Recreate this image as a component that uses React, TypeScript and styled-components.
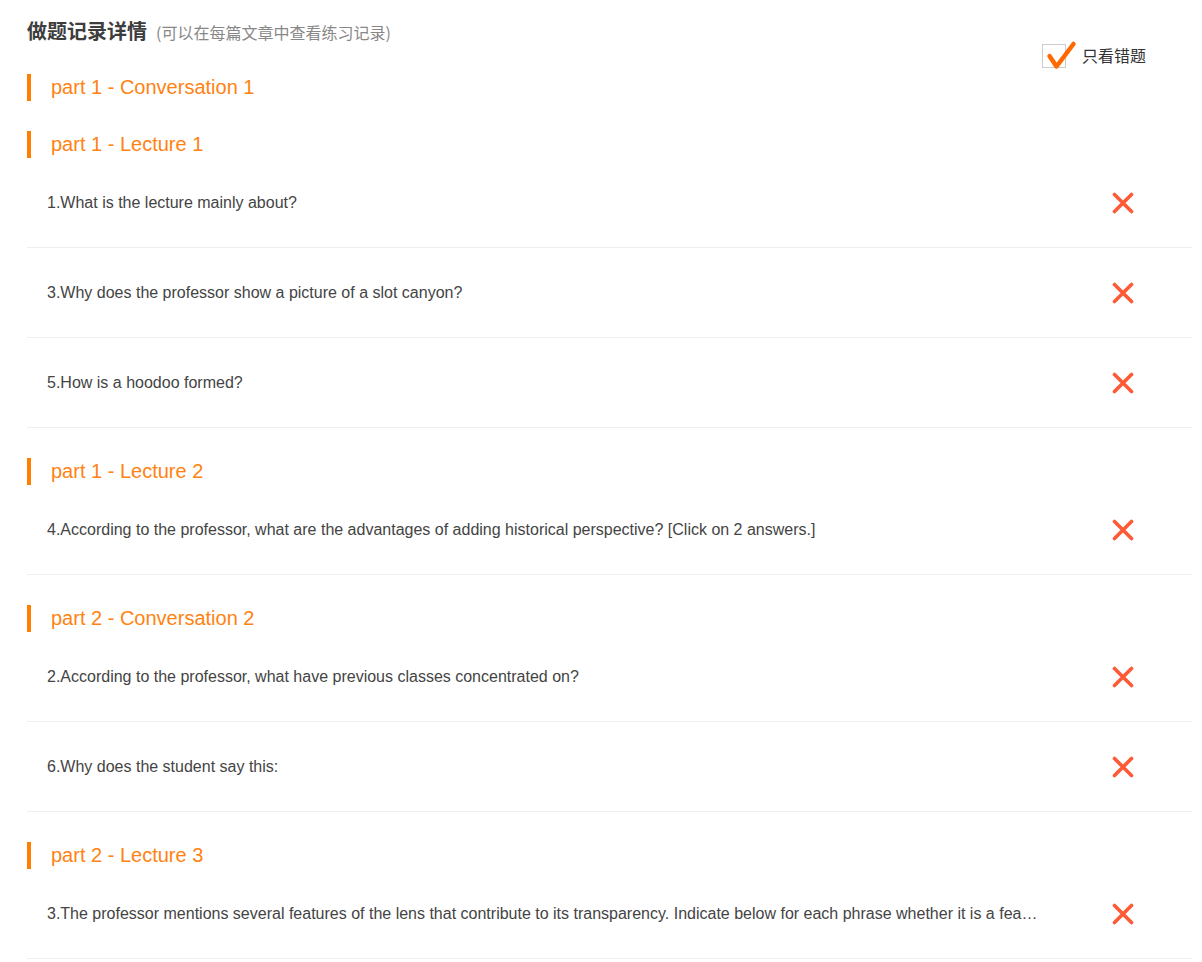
import React from "react";
import styled, { createGlobalStyle } from "styled-components";

const Global = createGlobalStyle`
  html, body { margin: 0; padding: 0; background: #fff; }
  body { font-family: "Liberation Sans", Arial, "Noto Sans CJK SC", sans-serif; color: #333; }
`;

const Page = styled.div`
  padding: 19px 10px 0 27px;
`;

const Header = styled.div`
  display: flex;
  justify-content: space-between;
  align-items: flex-start;
  height: 25px;
`;

const Title = styled.h1`
  margin: 0;
  font-family: "Noto Sans CJK SC", sans-serif;
  font-size: 20px;
  font-weight: 700;
  line-height: 24px;
  color: #3d3d3d;
  display: flex;
  align-items: baseline;
`;

const Sub = styled.span`
  margin-left: 9px;
  font-size: 16px;
  font-weight: 400;
  color: #888;
`;

const Filter = styled.label`
  display: flex;
  align-items: center;
  margin-top: 25px;
  margin-right: 46px;
  font-family: "Noto Sans CJK SC", sans-serif;
  font-size: 16px;
  line-height: 20px;
  color: #333;
  gap: 16px;
`;

const Box = styled.span`
  position: relative;
  width: 24px;
  height: 24px;
  box-sizing: border-box;
  border: 1px solid #ccc;
  background: #fff;
`;

const Label = styled.span`
  position: relative;
  top: -1px;
`;

const Tick = styled.svg`
  position: absolute;
  left: 0;
  top: -4px;
  overflow: visible;
`;

const SectionTitle = styled.h2`
  margin: 30px 0 0;
  height: 27px;
  border-left: 4px solid #ff8000;
  padding-left: 20px;
  font-size: 20px;
  font-weight: 400;
  line-height: 27px;
  color: #ff8212;
`;

const Row = styled.div`
  display: flex;
  align-items: center;
  height: 89px;
  border-bottom: 1px solid #eee;
  padding: 0 58px 0 20px;
`;

const Question = styled.div`
  flex: 1;
  min-width: 0;
  margin-right: 72px;
  font-size: 16px;
  color: #444;
  white-space: nowrap;
  overflow: hidden;
  text-overflow: ellipsis;
`;

const Wrong = () => (
  <svg width="22" height="22" viewBox="0 0 22 22">
    <path d="M2.5 2.5 L19.5 19.5 M19.5 2.5 L2.5 19.5" stroke="#ff5a36" strokeWidth="3.6" strokeLinecap="round" fill="none" />
  </svg>
);

const data: { title: string; qs: string[] }[] = [
  { title: "part 1 - Conversation 1", qs: [] },
  {
    title: "part 1 - Lecture 1",
    qs: [
      "1.What is the lecture mainly about?",
      "3.Why does the professor show a picture of a slot canyon?",
      "5.How is a hoodoo formed?",
    ],
  },
  {
    title: "part 1 - Lecture 2",
    qs: ["4.According to the professor, what are the advantages of adding historical perspective? [Click on 2 answers.]"],
  },
  {
    title: "part 2 - Conversation 2",
    qs: [
      "2.According to the professor, what have previous classes concentrated on?",
      "6.Why does the student say this:",
    ],
  },
  {
    title: "part 2 - Lecture 3",
    qs: [
      "3.The professor mentions several features of the lens that contribute to its transparency. Indicate below for each phrase whether it is a feature of the lens or not.",
    ],
  },
];

export default function App() {
  return (
    <Page>
      <Global />
      <Header>
        <Title>
          做题记录详情<Sub>(可以在每篇文章中查看练习记录)</Sub>
        </Title>
        <Filter>
          <Box>
            <Tick width="34" height="30" viewBox="0 0 34 30">
              <path d="M6.5 15 L13.5 25.5 L30.5 3" stroke="#ff6a00" strokeWidth="4.5" strokeLinecap="round" strokeLinejoin="round" fill="none" />
            </Tick>
          </Box>
          <Label>只看错题</Label>
        </Filter>
      </Header>
      {data.map((s) => (
        <section key={s.title}>
          <SectionTitle>{s.title}</SectionTitle>
          {s.qs.map((q) => (
            <Row key={q}>
              <Question>{q}</Question>
              <Wrong />
            </Row>
          ))}
        </section>
      ))}
    </Page>
  );
}
